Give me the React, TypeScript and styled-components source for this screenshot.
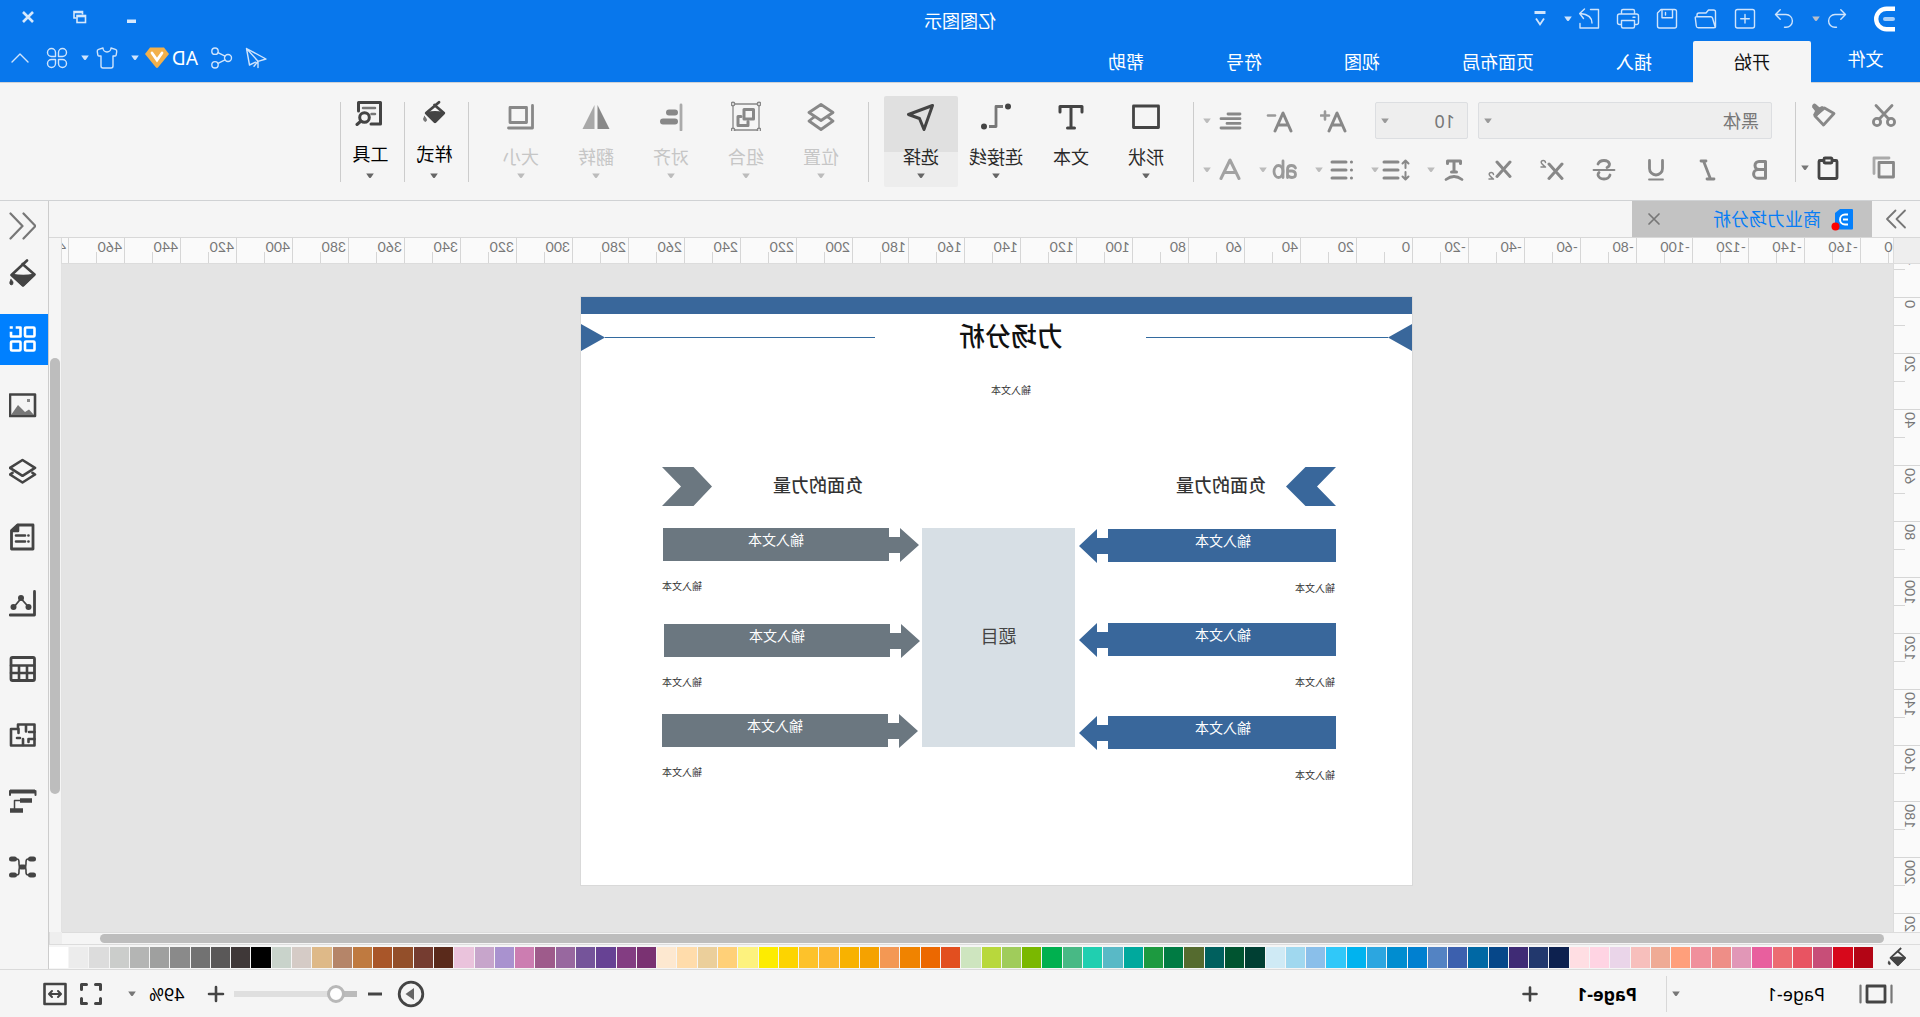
import React from 'react';
import styled, { createGlobalStyle } from 'styled-components';
import { Shirt } from 'lucide-react';

const GlobalStyle = createGlobalStyle`
  *, *::before, *::after { box-sizing: border-box; }
  body { margin: 0; background: #f5f5f5; }
`;

/* The whole window is shown as a mirror image. */
const Window = styled.div`
  display: flex;
  flex-direction: column;
  height: 100vh;
  overflow: hidden;
  background: #f5f5f5;
  color: #222;
  font: 18px/24px "Noto Sans", "Noto Sans CJK SC", sans-serif;
  transform: scaleX(-1);
  button, select, input { font: inherit; color: inherit; }
`;

const BareButton = styled.button<{ $w?: number }>`
  display: flex;
  align-items: center;
  justify-content: center;
  flex: none;
  width: ${p => (p.$w ? `${p.$w}px` : 'auto')};
  padding: 0;
  border: 0;
  background: none;
  white-space: nowrap;
`;

const Split = styled.div<{ $w?: number; $gap?: number }>`
  display: flex;
  align-items: center;
  flex: none;
  justify-content: space-between;
  gap: ${p => p.$gap ?? 0}px;
  width: ${p => (p.$w ? `${p.$w}px` : 'auto')};
`;

const Svg = ({ w = 24, h = w, color = '#888', sw = 2.8, children }: {
  w?: number; h?: number; color?: string; sw?: number; children: React.ReactNode;
}) => (
  <svg width={w} height={h} viewBox={`0 0 ${w} ${h}`} fill="none" stroke={color} strokeWidth={sw}
    strokeLinecap="round" strokeLinejoin="round" aria-hidden="true">
    {children}
  </svg>
);

const Caret = ({ color = '#777' }: { color?: string }) => (
  <svg width="10" height="6" viewBox="0 0 10 6" aria-hidden="true">
    <path d="M1.2 0.5h7.6L6 4.6q-1 1-2 0z" fill={color} />
  </svg>
);

/* ---------- header ---------- */

const Header = styled.header`
  flex: none;
  background: #0877ec;
  color: #fff;
  border-bottom: 1px solid #d0d2d6;
`;

const TitleBar = styled.div`
  display: grid;
  grid-template-columns: 1fr auto 1fr;
  align-items: center;
  height: 41px;
`;

const QuickBar = styled.div`
  display: flex;
  align-items: center;
  gap: 15px;
  padding: 0 0 4px 24px;
`;

const Logo = styled.div`
  display: flex;
  margin-right: 8px;
`;

const AppTitle = styled.h1`
  margin: 0;
  font-size: 18px;
  font-weight: 400;
`;

const WindowControls = styled.div`
  display: flex;
  justify-content: flex-end;
  padding: 0 2px 7px 0;
`;

const TabRow = styled.div`
  display: flex;
  height: 41px;
`;

const Menu = styled.nav`
  display: flex;
  flex: 1;
`;

const FileButton = styled(BareButton)`
  width: 109px;
  padding-bottom: 6px;
`;

const MenuTab = styled.button<{ $active?: boolean }>`
  height: 42px;
  padding: 0 41px;
  border: 0;
  border-radius: 2px 2px 0 0;
  background: ${p => (p.$active ? '#f5f5f5' : 'transparent')};
  && { color: ${p => (p.$active ? '#111' : '#fff')}; }
`;

const HeaderTools = styled.div`
  display: flex;
  align-items: center;
  gap: 11px;
  padding: 0 6px 8px 0;
`;

const Account = styled(Split)`
  gap: 3px;
  font-size: 19px;
`;

const LIGHT = '#cfe4fc';

const QIcon = ({ label, w = 24, children }: { label: string; w?: number; children: React.ReactNode }) => (
  <BareButton aria-label={label} $w={w}>
    <Svg w={w} h={24} color={LIGHT} sw={1.4}>{children}</Svg>
  </BareButton>
);

const HeaderArea = () => (
  <Header>
    <TitleBar>
      <QuickBar>
        <Logo>
          <svg width="24" height="26" viewBox="0 0 24 26" fill="none" aria-hidden="true">
            <path d="M1 2.7h8.5a10.3 10.3 0 0 1 0 20.6H1" stroke="#fff" strokeWidth="4.4" />
            <path d="M3 13h8" stroke="#a9cff8" strokeWidth="4" strokeLinecap="round" />
          </svg>
        </Logo>
        <Split $gap={4}>
          <QIcon label="撤销"><path d="M3.5 7.5H14a6.4 6.4 0 0 1 0 12.8h-1.5M8.2 2.8L3.5 7.5l4.7 4.8" /></QIcon>
          <Caret color="#b9bfc9" />
        </Split>
        <QIcon label="重做"><path d="M20.5 7.5H10a6.4 6.4 0 0 0 0 12.8h1.5M15.8 2.8l4.7 4.7-4.7 4.8" /></QIcon>
        <QIcon label="新建"><rect x="2.5" y="2.5" width="19" height="18.5" rx="2" /><path d="M12 7.5v8.5M7.7 11.7h8.6" /></QIcon>
        <QIcon label="打开"><path d="M2.5 20V5q0-2 2-2h5l2.5 3h7q2 0 2 2v1.5M2.7 20.5L5.5 11q.4-1.3 1.7-1.3h14.3q1.4 0 1.2 1.3l-1 8q-.3 1.8-2 1.8H4q-1.3 0-1.3-1.3z" /></QIcon>
        <QIcon label="保存"><path d="M4.5 2.5h13.5l3.5 3.5v13q0 2-2 2h-15q-2 0-2-2v-14.5q0-2 2-2zM6.5 2.8v8h10.5v-8M13.5 5.5v2.5" /></QIcon>
        <QIcon label="打印"><path d="M5.5 7V4q0-1.5 1.5-1.5h10q1.5 0 1.5 1.5v3M5.5 17.5h-2q-2 0-2-2V9q0-2 2-2h17q2 0 2 2v6.5q0 2-2 2h-2M5.5 13.5h13v6q0 1.5-1.5 1.5H7q-1.5 0-1.5-1.5zM5 10.2h2" /></QIcon>
        <Split $gap={4}>
          <QIcon label="导出"><path d="M10.5 2.5H2.5V21h18.5v-4.5M9 16q.2-8.5 11.5-9.5M16.5 2l4.8 4.5-3.8 5" /></QIcon>
          <Caret color={LIGHT} />
        </Split>
        <BareButton aria-label="自定义" $w={16}>
          <svg width="16" height="20" viewBox="0 0 16 20" fill="none" stroke={LIGHT} aria-hidden="true">
            <path d="M2.5 3.5h11" strokeWidth="3" /><path d="M4 9.5l4 6 4-6" strokeWidth="1.8" />
          </svg>
        </BareButton>
      </QuickBar>
      <AppTitle>亿图图示</AppTitle>
      <WindowControls>
        <BareButton aria-label="最小化" $w={52}>
          <svg width="16" height="16" viewBox="0 0 16 16" aria-hidden="true"><rect x="4" y="10.5" width="9" height="3.5" fill="#d6e8fc" /></svg>
        </BareButton>
        <BareButton aria-label="还原" $w={52}>
          <svg width="16" height="16" viewBox="0 0 16 16" fill="none" stroke="#d6e8fc" strokeWidth="1.6" aria-hidden="true">
            <path d="M5.5 5.5V2.5H14v6.5H11.500M5.500 3.500H14" /><rect x="2.5" y="6.5" width="8.5" height="7" /><path d="M2.5 7.5H11" />
          </svg>
        </BareButton>
        <BareButton aria-label="关闭" $w={52}>
          <svg width="16" height="16" viewBox="0 0 16 16" stroke="#d6e8fc" strokeWidth="2.6" aria-hidden="true"><path d="M3 3l10 10M13 3L3 13" /></svg>
        </BareButton>
      </WindowControls>
    </TitleBar>
    <TabRow>
      <Menu>
        <FileButton>文件</FileButton>
        <MenuTab $active>开始</MenuTab>
        {['插入', '页面布局', '视图', '符号', '帮助'].map(t => <MenuTab key={t}>{t}</MenuTab>)}
      </Menu>
      <HeaderTools>
        <QIcon label="发送"><path d="M21.5 2.5L2 13l8 2.3V21.5M21.5 2.5L18.5 19l-6-2.8M21.5 2.5L10 15.3l4 5" /></QIcon>
        <QIcon label="分享"><circle cx="5" cy="12" r="3.5" /><circle cx="18" cy="5.2" r="3.2" /><circle cx="18" cy="18.8" r="3.2" /><path d="M8 10.2l7-3.5M8 13.8l7 3.5" /></QIcon>
        <Account>
          AD
          <Split $gap={5}>
            <svg width="24" height="22" viewBox="0 0 24 22" aria-hidden="true">
              <path d="M5 0.5h14L24 7 13.2 20.3q-1.2 1.2-2.4 0L0 7z" fill="#f2b04a" />
              <path d="M7 6l5 7 5-7" fill="none" stroke="#fff" strokeWidth="2.8" strokeLinecap="round" />
            </svg>
            <Caret color={LIGHT} />
          </Split>
        </Account>
        <Split $gap={5}>
          <BareButton aria-label="主题"><Shirt size={24} color={LIGHT} strokeWidth={1.4} /></BareButton>
          <Caret color={LIGHT} />
        </Split>
        <QIcon label="应用">
          <path d="M2.5 6.5a4 4 0 1 1 8 0v4h-4a4 4 0 0 1-4-4zM13.5 10.5v-4a4 4 0 1 1 4 4zM13.5 13.5h4a4 4 0 1 1-4 4zM10.5 13.5v4a4 4 0 1 1-4-4z" />
        </QIcon>
        <QIcon label="收起" w={28}><path d="M6 16l8-8 8 8" /></QIcon>
      </HeaderTools>
    </TabRow>
  </Header>
);

/* ---------- ribbon ---------- */

const Ribbon = styled.section`
  display: flex;
  flex: none;
  align-items: flex-start;
  height: 118px;
  padding-top: 13px;
  border-bottom: 1px solid #d0d2d4;
`;

const Divider = styled.i`
  flex: none;
  width: 1px;
  height: 80px;
  margin-top: 6px;
  background: #ccc;
`;

const Clipboard = styled.div`
  display: grid;
  grid-template: 28px 28px / 56px 44px;
  row-gap: 25px;
  justify-items: start;
  align-items: center;
  padding: 5px 0 0 24px;
`;

const FontGroup = styled.div`
  display: flex;
  flex-direction: column;
  gap: 12px;
  padding: 6px 8px 0 23px;
`;

const FontRow = styled.div<{ $gap: number }>`
  display: flex;
  align-items: center;
  gap: ${p => p.$gap}px;
  height: 37px;
`;

const Picker = styled.label<{ $w: number }>`
  display: flex;
  align-items: center;
  width: ${p => p.$w}px;
  height: 37px;
  padding: 0 4px 0 12px;
  border: 1px solid #dcdee1;
  border-radius: 2px;
  background: #eee;
  color: #777;
`;

const PlainSelect = styled.select`
  appearance: none;
  flex: 1;
  min-width: 0;
  padding: 0;
  border: 0;
  background: none;
`;

const FormatRow = styled(FontRow)`
  justify-content: space-between;
`;

const SizeTools = styled.div`
  display: flex;
  align-items: center;
  padding-left: 4px;
`;

const AlignTool = styled(Split)`
  margin-left: 11px;
`;

const ToolSet = styled.div`
  display: flex;
  gap: 1px;
  padding: 0 15px 0 10px;
`;

const ToolButton = styled.button<{ $active?: boolean; $disabled?: boolean }>`
  display: flex;
  flex-direction: column;
  align-items: center;
  flex: none;
  width: 74px;
  height: 91px;
  padding: 5px 0 0;
  border: 0;
  border-radius: 2px;
  background: ${p => (p.$active ? 'linear-gradient(#e0e0e0 56px, #ededed 56px)' : 'none')};
  && { color: ${p => (p.$disabled ? '#c6c6c6' : '#2a2a2a')}; }
  span { margin: 14px 0 4px; }
`;

const NarrowTool = styled(ToolButton)`
  width: 63px;
  padding: 2px 0 0 4px;
  && { color: #000; }
  span { margin-bottom: 7px; }
`;

const DARK = '#444';
const MID = '#888';
const FAINT = '#bcbcbc';

const Bucket = ({ color = DARK, size = 24 }: { color?: string; size?: number }) => (
  <svg width={size} height={size} viewBox="0 0 24 24" fill="none" stroke={color} strokeWidth="2.2" strokeLinejoin="round" aria-hidden="true">
    <path d="M7 1.2L19.8 13 11 21.8 2.2 13 11.5 4.8" />
    <path d="M3 13.5q8-2 16 0L11 21.5z" fill={color} />
    <path d="M21.8 16.5q2 3 0 4.6-1.9 1-2-1.3 0-1 2-3.3z" fill={color} strokeWidth="0.5" />
  </svg>
);

const tools = [
  { t: '形状', c: DARK, icon: <rect x="2.5" y="5" width="25" height="21.5" stroke={DARK} /> },
  { t: '文本', c: '', icon: <path d="M4 11V5.5h22V11M15 5.5V27M11.5 27h7" stroke={DARK} strokeWidth="3" /> },
  { t: '连接线', c: DARK, icon: <><path d="M8 5.5h7v20h7" strokeLinecap="butt" stroke="#777" /><circle cx="3" cy="5.5" r="3" fill={DARK} stroke="none" /><circle cx="27" cy="25.5" r="3" fill={DARK} stroke="none" /></> },
  { t: '选择', c: DARK, active: true, icon: <path d="M3.5 4.5L27.5 13.5 16.5 17.5 12 28.5z" stroke={DARK} strokeWidth="3" /> },
];

const layout = [
  { t: '位置', icon: <path d="M15 3.5l12 8-12 8-12-8zM7.5 16.5L3 20l12 8.5L27 20l-4.5-3.5" strokeWidth="2.8" /> },
  { t: '组合', icon: <><rect x="2" y="3" width="26" height="26" strokeWidth="1.3" /><rect x="7.5" y="8.5" width="9.5" height="9.5" strokeWidth="3" /><path d="M20 15.5h3v9H13v-4" strokeWidth="3" /><g fill="#f5f5f5" strokeWidth="1.5"><circle cx="2" cy="3" r="1.7" /><circle cx="28" cy="3" r="1.7" /><circle cx="2" cy="29" r="1.7" /><circle cx="28" cy="29" r="1.7" /></g></> },
  { t: '对齐', icon: <><path d="M5 4v25" stroke="#aaa" /><path d="M11 11.5h6M11 20.5h12" strokeWidth="6" /></> },
  { t: '翻转', icon: <><path d="M13.5 4v24h-12z" fill={MID} stroke="none" /><path d="M16.5 4v24h12z" fill="#a8a8a8" stroke="none" /></> },
  { t: '大小', icon: <><rect x="9.5" y="6.5" width="16.5" height="15" /><path d="M3.5 4.5V27h24" /></> },
];

const RibbonArea = () => (
  <Ribbon>
    <Clipboard>
      <BareButton aria-label="剪切"><Svg><circle cx="5" cy="19" r="3.6" /><circle cx="19" cy="19" r="3.6" /><path d="M7.3 16L20 2.5M16.7 16L4 2.5" /></Svg></BareButton>
      <BareButton aria-label="格式刷" $w={32}><Svg><path d="M2 10.5L11.5 5 21 13l-8.5 9z" /><path d="M10.5 4.5L14 3l4 2 3-4 3 3-3 4 2 4-2.5 2.5z" fill={MID} stroke="none" /><path d="M17 7l4.5-4" strokeWidth="4.5" /></Svg></BareButton>
      <BareButton aria-label="复制"><Svg><path d="M2.5 6.5H17V21H2.5z" /><path d="M7 2h15v15.5" stroke="#aaa" /></Svg></BareButton>
      <Split $gap={6}>
        <BareButton aria-label="粘贴"><Svg color={DARK}><rect x="3" y="4.5" width="18" height="18" rx="1" /><rect x="8" y="2" width="8" height="5" rx="1" fill="#f5f5f5" /></Svg></BareButton>
        <Caret />
      </Split>
    </Clipboard>
    <Divider />
    <FontGroup>
      <FontRow $gap={10}>
        <Picker $w={294}>
          <PlainSelect aria-label="字体" defaultValue="黑体"><option>黑体</option></PlainSelect>
          <Caret color="#999" />
        </Picker>
        <Picker $w={93}>
          <PlainSelect aria-label="字号" defaultValue="10"><option>10</option></PlainSelect>
          <Caret color="#999" />
        </Picker>
        <SizeTools>
          <BareButton aria-label="增大字号" $w={54}><Svg w={28}><path d="M3 24l8-18 8 18M6 18h10" strokeWidth="3" /><path d="M19 8.5h8M23 4.5v8" strokeWidth="2.6" stroke="#999" /></Svg></BareButton>
          <BareButton aria-label="减小字号" $w={54}><Svg w={28}><path d="M3 24l8-18 8 18M6 18h10" strokeWidth="3" /><path d="M19 8.5h7" strokeWidth="2.6" stroke="#999" /></Svg></BareButton>
          <AlignTool $w={40}>
            <BareButton aria-label="对齐方式"><Svg><path d="M2 5h12M2 9.7h19M2 14.4h13M2 19h19" /></Svg></BareButton>
            <Caret color={FAINT} />
          </AlignTool>
        </SizeTools>
      </FontRow>
      <FormatRow $gap={0}>
        <FontRow $gap={28}>
          <BareButton aria-label="加粗"><Svg sw={3}><path d="M6.5 3.5h6.5a4 4 0 0 1 0 8h-6.5zM6.5 11.5h7.5a4.3 4.3 0 0 1 0 8.8h-7.5z" /></Svg></BareButton>
          <BareButton aria-label="倾斜"><Svg><path d="M14 3h5M6 21h7M16.5 3L9.5 21" /></Svg></BareButton>
          <BareButton aria-label="下划线"><Svg><path d="M5.5 2.5v8a6.5 6.5 0 0 0 13 0v-8" /><path d="M5 21.5h14" strokeWidth="1.8" /></Svg></BareButton>
          <BareButton aria-label="删除线"><Svg><path d="M18 6q-1.5-3.5-6-3.5T6.5 6q0 2.5 2.5 3.5M6 17q1 4 6 4t6-4q0-1.5-1-2.5" /><path d="M1.5 12h21" strokeWidth="1.8" /></Svg></BareButton>
          <BareButton aria-label="上标"><Svg><path d="M2 6l13 14.5M15 6L2 20.5" strokeWidth="3" /><path d="M18.5 4.5q.3-2 2.3-2t2 1.8q0 1.5-4.3 4.7H23" strokeWidth="1.5" /></Svg></BareButton>
          <BareButton aria-label="下标"><Svg><path d="M2 4l13 14.5M15 4L2 18.5" strokeWidth="3" /><path d="M18.5 16.5q.3-2 2.3-2t2 1.8q0 1.5-4.3 4.7H23" strokeWidth="1.5" /></Svg></BareButton>
        </FontRow>
        <FontRow $gap={16}>
          <Split $w={40}><BareButton aria-label="文字样式"><Svg><path d="M5.5 5.5v-2.5h13v2.5M12 3v11M9.5 14h5" strokeWidth="3" /><path d="M4 21.5q8-6 16 0" /></Svg></BareButton><Caret color={FAINT} /></Split>
          <Split $w={40}><BareButton aria-label="行距"><Svg w={28} h={24}><path d="M12 4h14M12 12h14M12 20h14" strokeWidth="3" /><path d="M4.5 3v7M1.5 5.5L4.5 2.5l3 3M4.5 14v7M1.5 18.5l3 3 3-3" strokeWidth="2" /></Svg></BareButton><Caret color={FAINT} /></Split>
          <Split $w={40}><BareButton aria-label="列表"><Svg><path d="M8 4h14M8 12h14M8 20h14M2.5 4h.1M2.5 12h.1M2.5 20h.1" strokeWidth="3" /></Svg></BareButton><Caret color={FAINT} /></Split>
          <Split $w={40}><BareButton aria-label="突出显示"><Svg w={26} h={24} color="#9a9a9a"><path d="M2.5 10q1-2.5 4-2.5 4 0 4 4v8M10.5 13H6q-3.5.3-3.5 3.5 0 3 3.5 3 3 0 4.5-2.5M15 3v16.5" /><ellipse cx="19.5" cy="13.5" rx="4.5" ry="6" /></Svg></BareButton><Caret color={FAINT} /></Split>
          <Split $w={40}><BareButton aria-label="字体颜色"><Svg color="#a2a2a2"><path d="M3 20.5L12 2l9 18.5M6 14.5h12" strokeWidth="3" /></Svg></BareButton><Caret color={FAINT} /></Split>
        </FontRow>
      </FormatRow>
    </FontGroup>
    <Divider />
    <ToolSet>
      {tools.map(x => (
        <ToolButton key={x.t} $active={x.active}>
          <Svg w={30}>{x.icon}</Svg>
          <span>{x.t}</span>
          {x.c && <Caret color="#666" />}
        </ToolButton>
      ))}
    </ToolSet>
    <Divider />
    <ToolSet>
      {layout.map(x => (
        <ToolButton key={x.t} $disabled disabled>
          <Svg w={30}>{x.icon}</Svg>
          <span>{x.t}</span>
          <Caret color={FAINT} />
        </ToolButton>
      ))}
    </ToolSet>
    <Divider />
    <NarrowTool>
      <Svg w={30}><svg x="3" y="2" width="26" height="26" viewBox="0 0 26 26"><path d="M7 2.2L19.8 13 11 21.8 2.2 13 11.5 5" stroke={DARK} /><path d="M3 13.5q8-2 16 0L11 21.5z" fill={DARK} stroke={DARK} /><path d="M21.5 16.5q2 3 0 4.6-1.9 1-2-1.3 0-1 2-3.3z" fill="#777" stroke="#777" strokeWidth="1" /></svg></Svg>
      <span>样式</span>
      <Caret color="#666" />
    </NarrowTool>
    <Divider />
    <NarrowTool>
      <Svg w={30} color={DARK} sw={3}>
        <path d="M14 26H4.5V4.5h22V13" /><path d="M10 10h12M10 16h3.5" stroke="#777" strokeWidth="2.5" /><circle cx="20.5" cy="19.5" r="4.8" /><path d="M24 23l4 3.5" />
      </Svg>
      <span>工具</span>
      <Caret color="#666" />
    </NarrowTool>
    <Divider />
  </Ribbon>
);

/* ---------- workspace ---------- */

const Body = styled.div`
  display: flex;
  flex: 1;
  min-height: 0;
`;

const Editor = styled.main`
  display: flex;
  flex-direction: column;
  flex: 1;
  min-width: 0;
`;

const DocTabs = styled.div`
  display: flex;
  flex: none;
  height: 37px;
  border-bottom: 1px solid #d8d8d8;
`;

const DocTab = styled.div`
  display: flex;
  align-items: center;
  width: 240px;
  padding: 0 14px 0 18px;
  background: #c3c3c3;
  color: #077df5;
`;

const DocName = styled.span`
  flex: 1;
  padding-left: 10px;
`;

const Board = styled.div`
  display: grid;
  grid-template-columns: 27px minmax(0, 1fr) 13px;
  grid-template-rows: 26px minmax(0, 1fr) 13px;
  flex: 1;
  min-height: 0;
`;

const Corner = styled.div`
  background: #eee;
  border-right: 1px solid #dcdcdc;
  border-bottom: 1px solid #dcdcdc;
`;

const RulerX = styled.div`
  display: flex;
  min-width: 0;
  overflow: hidden;
  background: #fafafa;
  border-bottom: 1px solid #dcdcdc;
  color: #777;
  font-family: Lato, sans-serif;
  font-size: 14px;
  line-height: 17px;
`;

const TickX = styled.span`
  flex: none;
  width: 56px;
  padding-left: 2px;
  border-left: 1px solid #d6d6d6;
  background: linear-gradient(#d6d6d6, #d6d6d6) 27px 100% / 1px 11px no-repeat;
  &:first-child { margin-left: -24px; }
`;

const RulerY = styled.div`
  display: flex;
  flex-direction: column;
  min-height: 0;
  overflow: hidden;
  background: #fafafa;
  border-right: 1px solid #dcdcdc;
  color: #777;
  font-family: Lato, sans-serif;
  font-size: 14px;
  line-height: 17px;
`;

const TickY = styled.span`
  display: flex;
  align-items: flex-start;
  flex: none;
  height: 56px;
  padding: 2px 0 0 1px;
  border-top: 1px solid #d6d6d6;
  background: linear-gradient(#d6d6d6, #d6d6d6) 100% 27px / 11px 1px no-repeat;
  &:first-child { margin-top: -23px; }
  b {
    font-weight: 400;
    writing-mode: vertical-rl;
    transform: rotate(180deg);
  }
`;

const ScrollYHead = styled.div`
  border-left: 1px solid #dcdcdc;
`;

const ScrollY = styled.div`
  padding: 94px 1px 0;
  border-left: 1px solid #e2e2e2;
  &::before {
    content: "";
    display: block;
    height: 76%;
    border-radius: 5px;
    background: #bdbdbd;
  }
`;

const ScrollX = styled.div`
  padding: 1px 38px 2px 9px;
  border-top: 1px solid #dcdcdc;
  border-bottom: 1px solid #dcdcdc;
  &::before {
    content: "";
    display: block;
    height: 9px;
    border-radius: 5px;
    background: #bdbdbd;
  }
`;

const ScrollEnd = styled.div`
  border-top: 1px solid #dcdcdc;
  border-bottom: 1px solid #dcdcdc;
`;

const Canvas = styled.div`
  overflow: hidden;
  padding: 33px 0 0 481px;
  background: #e4e4e4;
`;

const Sheet = styled.article`
  position: relative;
  width: 831px;
  height: 588px;
  border-top: 17px solid #39679b;
  background: #fff;
  box-shadow: 0 0 0 1px #d9d9d9;
`;

/* Items on the sheet are placed by their own coordinates, measured from the page corner. */
const Placed = styled.div<{ $x: number; $y: number }>`
  position: absolute;
  left: ${p => p.$x}px;
  top: ${p => p.$y - 17}px;
  display: flex;
`;

const SheetTitle = styled(Placed)`
  font-size: 26px;
  line-height: 30px;
  font-weight: 500;
  color: #111;
`;

const ForceHeading = styled(Placed)`
  font-size: 18px;
  line-height: 24px;
  font-weight: 500;
  color: #333;
`;

const Note = styled(Placed)`
  font-size: 10px;
  line-height: 14px;
  color: #333;
`;

const Subject = styled(Placed)`
  width: 153px;
  height: 219px;
  align-items: center;
  justify-content: center;
  padding-bottom: 4px;
  background: #d7dfe5;
  color: #444;
`;

const Force = styled(Placed)`
  width: 258px;
  height: 34px;
  svg { position: absolute; inset: 0; }
`;

const ForceText = styled.span<{ $flip?: boolean }>`
  position: relative;
  width: 226px;
  margin-left: ${p => (p.$flip ? 31 : 0)}px;
  text-align: center;
  font-size: 14px;
  line-height: 24px;
  color: #fff;
`;

const BLUE = '#39679b';
const GREY = '#6b7780';

const ForceArrow = ({ x, y, flip }: { x: number; y: number; flip?: boolean }) => (
  <Force $x={x} $y={y}>
    <svg width="258" height="34" viewBox="0 0 258 34" aria-hidden="true">
      {flip
        ? <path d="M257 0H31V9H20V0L1 17 20 34V25H31V33H257z" fill={GREY} />
        : <path d="M0 0h228v9h11V0l18 17-18 17V25h-11v8H0z" fill={BLUE} />}
    </svg>
    <ForceText $flip={flip}>输入文本</ForceText>
  </Force>
);

const Diagram = () => (
  <Sheet>
    <Placed $x={0} $y={27}>
      <svg width="831" height="28" viewBox="0 0 831 28" aria-hidden="true">
        <path d="M0 0l24 13.5L0 27zM831 0l-24 13.5L831 27z" fill={BLUE} />
        <path d="M24 13.5h242M537 13.5h270" stroke="#336a9f" />
      </svg>
    </Placed>
    <SheetTitle $x={349} $y={24}>力场分析</SheetTitle>
    <Note $x={381} $y={86}>输入文本</Note>

    <Placed $x={76} $y={170}>
      <svg width="50" height="39" viewBox="0 0 50 39" aria-hidden="true"><path d="M0 0h30.5L50 19.5 30.5 39H0l19-19.5z" fill={BLUE} /></svg>
    </Placed>
    <ForceHeading $x={146} $y={176}>负面的力量</ForceHeading>
    <ForceHeading $x={549} $y={176}>负面的力量</ForceHeading>
    <Placed $x={700} $y={170}>
      <svg width="50" height="39" viewBox="0 0 50 39" aria-hidden="true"><path d="M50 0H18.5L0 19.5 18.5 39H50L31 19.5z" fill={GREY} /></svg>
    </Placed>

    <ForceArrow x={76} y={232} />
    <Note $x={77} $y={284}>输入文本</Note>
    <ForceArrow x={76} y={326} />
    <Note $x={77} $y={378}>输入文本</Note>
    <ForceArrow x={76} y={419} />
    <Note $x={77} $y={471}>输入文本</Note>

    <Subject $x={337} $y={231}>题目</Subject>

    <ForceArrow flip x={492} y={231} />
    <Note $x={710} $y={282}>输入文本</Note>
    <ForceArrow flip x={491} y={327} />
    <Note $x={710} $y={378}>输入文本</Note>
    <ForceArrow flip x={493} y={417} />
    <Note $x={710} $y={468}>输入文本</Note>
  </Sheet>
);

const Palette = styled.div`
  display: flex;
  flex: none;
  align-items: center;
  height: 24px;
`;

const PaletteHead = styled.div`
  display: flex;
  flex: none;
  width: 47px;
  padding-left: 13px;
`;

const Swatches = styled.div`
  display: flex;
  flex: 1;
  gap: 1px;
`;

const Swatch = styled.button<{ $c: string }>`
  flex: 1;
  min-width: 0;
  height: 21px;
  padding: 0;
  border: 0;
  background: ${p => p.$c};
`;

const colours = `b30515 d7081b c74e78 e85462 ec6c72 e85f9e e197b7 ee8e87 f0909c ff9f7b efab95 f7bfbc ead5e9 ffd4e3 ffdee3
0d214f 22386d 3f2b75 064789 0068a4 3c60ae 5383c3 0080d0 008dd0 2ca6e0 00b3ef 30c8f9 8abfea a0d8ef cfeaf5 003f33 005430
00605e 556b2f 007b43 1d9a40 00a99d 59b9c6 20cfb0 48b985 00b04f 7ab800 a0cc5b b8d83c cee5bf e24f1f ec6800 f08300 f39854
f5a200 f8b200 fcb830 fdc22b fdd400 fdec00 fdf27e ffd078 ebcf9b ffdcab fde8d0
7a3272 833d82 674294 75549a 98689f 9e5b8b cc7db1 a992cf c7a5cb eac3dc 5a2a1b 753c30 934f2a a95629 bf7a40 b58569 deb988
d5cbc6 c9d3cb 000000 3f3838 5a5858 727272 8a8a8a 9fa09f b4b5b4 cbcdcb dcdcdc ececec ffffff`.split(/\s+/);

const range = (from: number, to: number) => {
  const out: number[] = [];
  for (let n = from; n <= to; n += 20) out.push(n);
  return out;
};

const EditorArea = () => (
  <Editor>
    <DocTabs>
      <BareButton aria-label="展开" $w={48}><Svg color="#777" sw={1.8}><path d="M3 3.5l8.5 8.5L3 20.5M12.5 3.5L21 12l-8.5 8.5" /></Svg></BareButton>
      <DocTab>
        <svg width="23" height="23" viewBox="0 0 23 23" aria-hidden="true">
          <path d="M2 1h12l5 4v15.5q0 1-1 1H2q-1 0-1-1V2q0-1 1-1z" fill="#0580fb" />
          <path d="M6 6.5h3a5 5 0 0 1 0 10H6M6 11.5h5" fill="none" stroke="#fff" strokeWidth="1.9" />
          <circle cx="18.5" cy="18.5" r="4" fill="#f00" />
        </svg>
        <DocName>商业力场分析</DocName>
        <BareButton aria-label="关闭标签"><Svg w={16} color="#777" sw={1.7}><path d="M3 3l10 10M13 3L3 13" /></Svg></BareButton>
      </DocTab>
    </DocTabs>
    <Board>
      <Corner />
      <RulerX>{range(-180, 480).map(n => <TickX key={n}>{n}</TickX>)}</RulerX>
      <ScrollYHead />
      <RulerY>{range(-20, 220).map(n => <TickY key={n}><b>{n}</b></TickY>)}</RulerY>
      <Canvas><Diagram /></Canvas>
      <ScrollY />
      <ScrollEnd />
      <ScrollX />
      <Corner />
    </Board>
    <Palette>
      <PaletteHead><Bucket size={20} /></PaletteHead>
      <Swatches>{colours.map((c, i) => <Swatch key={i} $c={`#${c}`} aria-label={`#${c}`} />)}</Swatches>
    </Palette>
  </Editor>
);

/* ---------- side panel ---------- */

const SidePanel = styled.aside`
  display: flex;
  flex-direction: column;
  flex: none;
  gap: 15px;
  width: 49px;
  border-left: 1px solid #ccc;
`;

const Collapse = styled(BareButton)`
  height: 51px;
  margin-bottom: -19px;
  padding: 0 0 2px 4px;
`;

const SideButton = styled(BareButton)<{ $active?: boolean }>`
  height: 51px;
  padding: 0 0 2px 2px;
  background: ${p => (p.$active ? '#0080ff' : 'none')};
`;

const sideIcons: { t: string; active?: boolean; icon: React.ReactNode }[] = [
  { t: '填充', icon: <><path d="M10 1.5L25.5 16 14 26.5 2.5 15.5 14.5 5" /><path d="M3.5 16q10 2 21 0L14 26z" fill={DARK} /><path d="M26 20.5q2.5 4 0 5.5-2.5 0-2-3 .5-1.2 2-2.5z" fill={DARK} strokeWidth="0.8" /></> },
  { t: '符号库', active: true, icon: <><rect x="2.5" y="2.5" width="9.5" height="9" rx="1" /><rect x="2.5" y="16.5" width="9.5" height="9" rx="1" /><rect x="16.5" y="16.5" width="9.5" height="9" rx="1" /><path d="M20 2.5h-3.5v9H26V8M25.5 2.5h.5" strokeLinecap="square" /></> },
  { t: '图片', icon: <><rect x="2" y="3.5" width="25" height="21.5" /><path d="M3 24l5-5.5 4 2.5 7-7 7 10z" fill="#777" stroke="none" /><rect x="7" y="8" width="3" height="3" fill={MID} stroke="none" /></> },
  { t: '图层', icon: <path d="M14.5 3L27 10.8l-12.5 8L2 10.8zM4.5 15.8L2 17.5l12.5 8L27 17.5l-2.5-1.7" /> },
  { t: '页面', icon: <><path d="M4 2h15.5l6 5.5V26H4z" strokeWidth="2.8" /><path d="M19 2v6h6" fill={DARK} /><path d="M12 12.5h9M12 18.5h9M8.5 12.5h.1M8.5 18.5h.1" /></> },
  { t: '图表', icon: <><path d="M2.5 2.5V26H27" strokeWidth="2.8" /><path d="M8 18.5l8-9 7.5 9" strokeWidth="1.8" /><circle cx="8.5" cy="18" r="3" fill={DARK} stroke="none" /><circle cx="16" cy="9" r="3" fill={DARK} stroke="none" /><circle cx="23.5" cy="18" r="3" fill={DARK} stroke="none" /></> },
  { t: '表格', icon: <><rect x="2.5" y="2.5" width="23.5" height="23" rx="1.5" strokeWidth="2.8" /><path d="M3 10.5h23M3 18h23M10 10.5v15M18 10.5v15" /></> },
  { t: '平面图', icon: <><path d="M11 3.5H2.5v21H26V8h-7M19 8V3.5h-8v7" /><path d="M2.5 11H8M2.5 18h6v3M14 24v-6M18.5 8v4M20 17h-3" /></> },
  { t: '甘特图', icon: <><path d="M1.5 4v4M27 4v4" strokeWidth="2" /><path d="M2 4.5h25" strokeWidth="4" strokeLinecap="butt" /><path d="M5 13.5h12M14 23.5h13" strokeWidth="4.5" strokeLinecap="butt" /><path d="M17 13.5h5.5v9" strokeWidth="1.5" /></> },
  { t: '思维导图', icon: <><path d="M7 6h2q2 0 2 3v2q0 3 3.500 3t3.500-3V9q0-3 2-3h2M7 22h2q2 0 2-3v-2q0-3 3.500-3t3.500 3v2q0 3 2 3h2" strokeWidth="1.6" /><path d="M3.500 6h3M3.500 22h3M22.500 6h3M22.500 22h3M13 14h3" strokeWidth="5" /></> },
];

/* ---------- status bar ---------- */

const StatusBar = styled.footer`
  display: flex;
  flex: none;
  align-items: center;
  justify-content: space-between;
  height: 48px;
  padding: 0 43px 0 27px;
  border-top: 1px solid #dadada;
  color: #000;
`;

const PagePicker = styled.label`
  display: flex;
  align-items: center;
  width: 188px;
  padding-left: 34px;
`;

const StatusDivider = styled(Divider)`
  height: 36px;
  margin: 0 29px 0 4px;
  background: #d8d8d8;
`;

const PageTab = styled.button`
  margin-right: 37px;
  padding: 0;
  border: 0;
  background: none;
  && { font-weight: 700; }
`;

const ZoomValue = styled(Split)`
  gap: 12px;
  padding: 0 12px 0 9px;
`;

const ZoomSlider = styled.input`
  appearance: none;
  width: 123px;
  height: 18px;
  margin: 0;
  background: linear-gradient(90deg, #bbb 20px, #dfdfdf 20px) center / 100% 6px no-repeat;
  border-radius: 3px;
  &::-webkit-slider-thumb {
    appearance: none;
    width: 18px;
    height: 18px;
    border: 3px solid #b8b8b8;
    border-radius: 50%;
    background: #fff;
  }
`;

const StatusArea = () => (
  <StatusBar>
    <Split>
      <BareButton aria-label="页面视图">
        <Svg w={34} h={20} color={DARK}><rect x="8" y="2" width="18" height="16" /><path d="M1.5 1.5v17M32.5 1.5v17" stroke="#777" strokeWidth="2.2" /></Svg>
      </BareButton>
      <PagePicker>
        <PlainSelect aria-label="页面" defaultValue="Page-1"><option>Page-1</option></PlainSelect>
        <Caret />
      </PagePicker>
      <StatusDivider />
      <PageTab>Page-1</PageTab>
      <BareButton aria-label="添加页面"><Svg w={20} color={DARK} sw={2.6}><path d="M10 3.5v13M3.5 10h13" /></Svg></BareButton>
    </Split>
    <Split $gap={12}>
      <BareButton aria-label="演示"><Svg w={28} color={DARK}><circle cx="14" cy="14" r="11.8" /><path d="M11 8l8.5 6-8.5 6z" fill="#666" stroke="none" /></Svg></BareButton>
      <Split $gap={8}>
        <BareButton aria-label="缩小"><Svg w={20} color={DARK} sw={3}><path d="M3 10h14" strokeLinecap="butt" /></Svg></BareButton>
        <ZoomSlider type="range" min={0} max={400} defaultValue={44} aria-label="缩放" />
        <BareButton aria-label="放大"><Svg w={20} color={DARK} sw={2.6}><path d="M10 3v14M3 10h14" /></Svg></BareButton>
      </Split>
      <ZoomValue>
        <span>49%</span>
        <Caret />
      </ZoomValue>
      <BareButton aria-label="全屏"><Svg w={24} color={DARK} sw={3}><path d="M2.5 7.5v-5h5M16.5 2.5h5v5M21.5 16.5v5h-5M7.5 21.5h-5v-5" /></Svg></BareButton>
      <BareButton aria-label="适合宽度"><Svg w={24} color={DARK} sw={2.6}><rect x="1.5" y="2" width="21" height="20" /><path d="M6.5 12h11M9 9l-3 3 3 3M15 9l3 3-3 3" strokeWidth="2" /></Svg></BareButton>
    </Split>
  </StatusBar>
);

export default function App() {
  return (
    <>
      <GlobalStyle />
      <Window>
        <HeaderArea />
        <RibbonArea />
        <Body>
          <EditorArea />
          <SidePanel>
            <Collapse aria-label="收起面板"><Svg w={28} color="#777" sw={2.2}><path d="M12.5 1.5L.5 14l12 12.5M25.5 1.5L13.5 14l12 12.5" /></Svg></Collapse>
            {sideIcons.map(s => (
              <SideButton key={s.t} aria-label={s.t} $active={s.active}>
                <Svg w={28} color={s.active ? '#fff' : DARK} sw={2.6}>{s.icon}</Svg>
              </SideButton>
            ))}
          </SidePanel>
        </Body>
        <StatusArea />
      </Window>
    </>
  );
}
